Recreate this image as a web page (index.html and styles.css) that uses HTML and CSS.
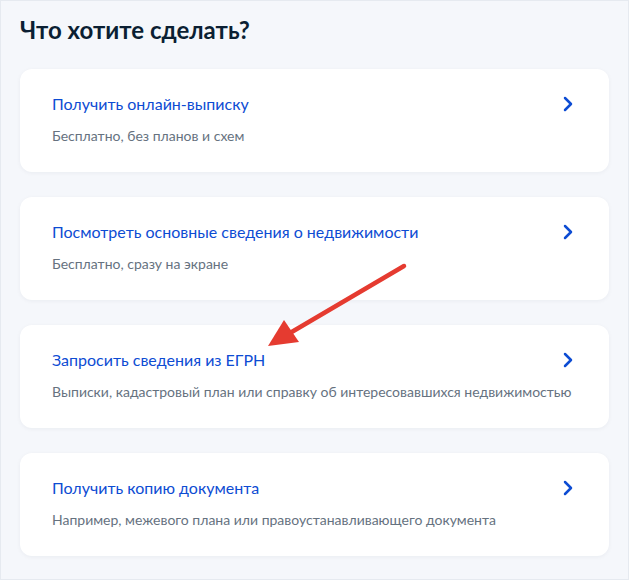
FILE: index.html
```html
<!DOCTYPE html>
<html lang="ru">
<head>
  <meta charset="UTF-8">
  <meta name="viewport" content="width=device-width, initial-scale=1.0">
  <title>Что хотите сделать?</title>
  <link rel="stylesheet" href="styles.css">
</head>
<body>

  <div class="services-page">
    <h2 class="services-title">Что хотите сделать?</h2>

    <div class="services-list">
      <a href="#" class="service-card">
        <div class="service-name">Получить онлайн-выписку</div>
        <svg class="service-chevron" width="10" height="16" viewBox="0 0 10 16"><path d="M2 2l6 6-6 6" fill="none" stroke="#0d4cd3" stroke-width="2.5" stroke-linecap="round" stroke-linejoin="round"/></svg>
        <div class="service-desc">Бесплатно, без планов и схем</div>
      </a>

      <a href="#" class="service-card">
        <div class="service-name">Посмотреть основные сведения о недвижимости</div>
        <svg class="service-chevron" width="10" height="16" viewBox="0 0 10 16"><path d="M2 2l6 6-6 6" fill="none" stroke="#0d4cd3" stroke-width="2.5" stroke-linecap="round" stroke-linejoin="round"/></svg>
        <div class="service-desc">Бесплатно, сразу на экране</div>
      </a>

      <a href="#" class="service-card">
        <div class="service-name">Запросить сведения из ЕГРН</div>
        <svg class="service-chevron" width="10" height="16" viewBox="0 0 10 16"><path d="M2 2l6 6-6 6" fill="none" stroke="#0d4cd3" stroke-width="2.5" stroke-linecap="round" stroke-linejoin="round"/></svg>
        <div class="service-desc">Выписки, кадастровый план или справку об интересовавшихся недвижимостью</div>
      </a>

      <a href="#" class="service-card">
        <div class="service-name">Получить копию документа</div>
        <svg class="service-chevron" width="10" height="16" viewBox="0 0 10 16"><path d="M2 2l6 6-6 6" fill="none" stroke="#0d4cd3" stroke-width="2.5" stroke-linecap="round" stroke-linejoin="round"/></svg>
        <div class="service-desc">Например, межевого плана или правоустанавливающего документа</div>
      </a>
    </div>

    <!-- red pointer drawn over the screenshot -->
    <svg class="pointer-arrow" width="629" height="580" viewBox="0 0 629 580">
      <line x1="404" y1="266" x2="290" y2="333" stroke="#e53b30" stroke-width="4.5" stroke-linecap="round"/>
      <polygon points="268,346 284,320 299,342" fill="#e53b30"/>
    </svg>
  </div>

</body>
</html>
```

FILE: styles.css
```css
body {
  margin: 0;
  padding: 0;
  background-color: #f5f7fb;
  font-family: Lato, "Noto Sans", sans-serif;
}
.services-page {
  position: relative;
  box-sizing: border-box;
  width: 629px;
  height: 580px;
  padding: 13px 19px 0;
  border: 1px solid #e6eaf0;
  overflow: hidden;
}
.services-title {
  margin: 0 0 23px;
  font-size: 24px;
  line-height: 32px;
  font-weight: 700;
  color: #0b1f33;
}
.services-list {
  display: flex;
  flex-direction: column;
  gap: 25px;
}
.service-card {
  display: grid;
  grid-template-columns: 1fr auto;
  align-content: start;
  height: 103px;
  box-sizing: border-box;
  padding: 23px 36px 0 32px;
  background-color: #ffffff;
  border-radius: 12px;
  box-shadow: 0 1px 4px rgba(11, 31, 51, 0.05);
  text-decoration: none;
}
.service-name {
  font-size: 16px;
  line-height: 24px;
  color: #0d4cd3;
}
.service-desc {
  grid-column: 1 / -1;
  margin-top: 10px;
  font-size: 14px;
  line-height: 20px;
  color: #66727f;
  white-space: nowrap;
}
.service-chevron {
  margin-top: 4px;
}
.pointer-arrow {
  position: absolute;
  left: -1px;
  top: -1px;
  pointer-events: none;
}
```
